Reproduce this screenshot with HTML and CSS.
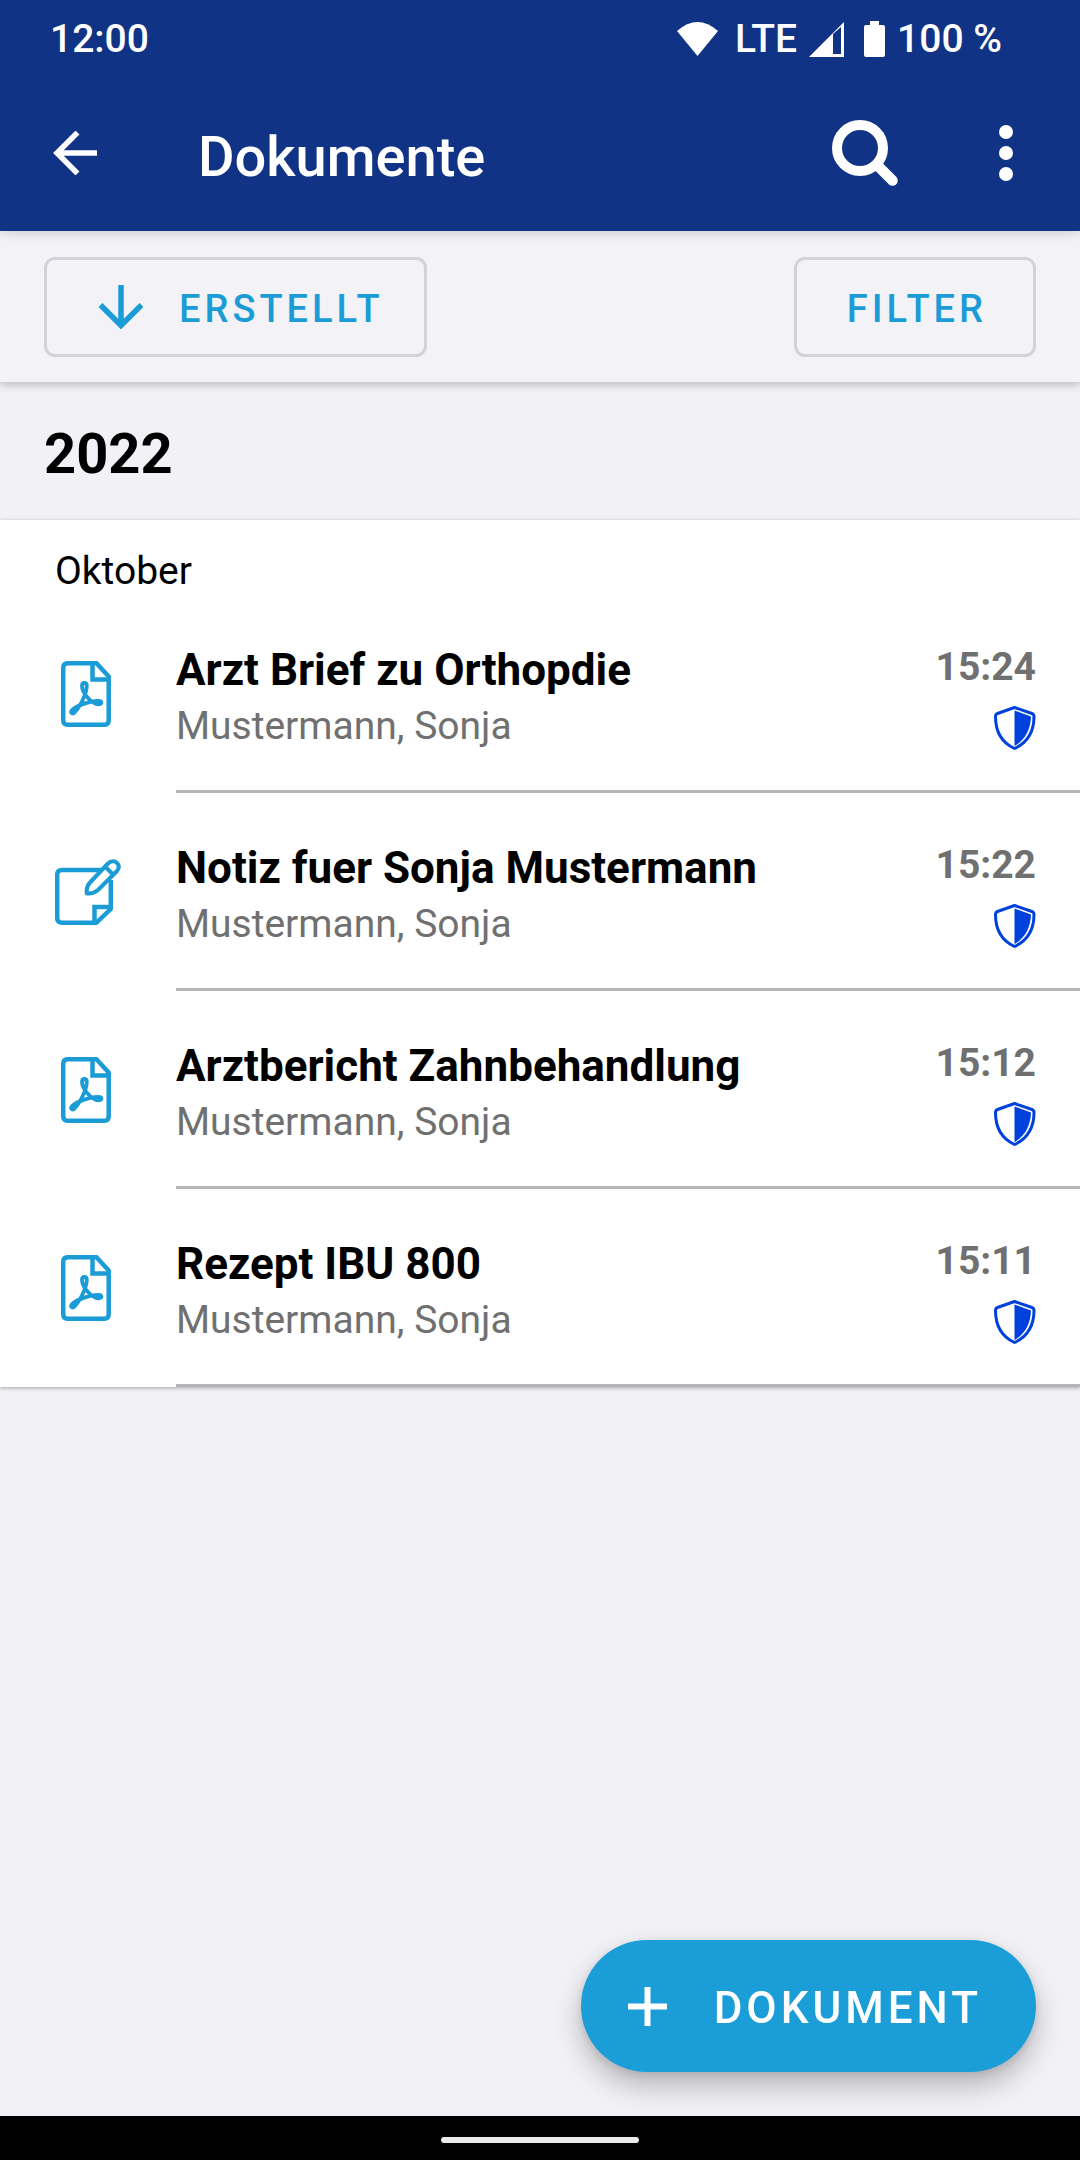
FILE: index.html
```html
<!DOCTYPE html>
<html lang="de">
<head>
<meta charset="utf-8">
<meta name="viewport" content="width=device-width, initial-scale=1">
<title>Dokumente</title>
<link rel="stylesheet" href="styles.css">
</head>
<body>
<svg class="sprite" aria-hidden="true">
  <symbol id="pdf" viewBox="0 0 66 66">
    <g fill="none" stroke="currentColor" stroke-width="4.500" stroke-linejoin="round">
      <path d="M12 2.200H41.500L53.700 15.500V59Q53.700 63.800 49 63.800H13Q8.200 63.800 8.200 59V7Q8.200 2.200 13 2.200"/>
      <path d="M37.500 2V18.500H54" stroke-linejoin="miter"/>
      <path stroke-width="3.800" d="M27 25C27 21 31.800 21 31.800 25C31.800 33 24 47 20 51C17.500 54 14.500 51.500 17 49C21 45 35 39.800 43 39.800C47.500 39.800 47.500 43 43.500 43.300C37 43.500 27 32 27 25Z"/>
    </g>
  </symbol>
  <symbol id="note" viewBox="0 0 66 66">
    <g fill="none" stroke="currentColor" stroke-width="4.500" stroke-linejoin="round">
      <path d="M47 11H7Q2.200 11 2.200 16V59Q2.200 63.700 7 63.700H41.500L55.800 50V21"/>
      <path d="M39.500 64V48H56" stroke-linejoin="miter"/>
      <path stroke-width="4" d="M31.800 34.400C31.200 30 32 26.500 35 23.500L53 4.500C56 1.500 60 1.700 62 4C64.500 6.500 64.500 9 62 12L43 31C40 33.500 36 35 31.800 34.400ZM50.500 8L58.500 16"/>
    </g>
  </symbol>
  <symbol id="shield" viewBox="0 0 42 44">
    <path fill="none" stroke="currentColor" stroke-width="3" stroke-linejoin="round" d="M20.500 1.500L38 7.500Q40 8.200 40 10.500C40 26 32.500 37 20.500 42.500C8.500 37 1.500 26 1.500 10.500Q1.500 8.200 3.500 7.500Z"/>
    <path fill="currentColor" d="M20.500 4.500L37 10.500C36.500 24 31 34 20.500 40Z"/>
  </symbol>
</svg>

<header class="top">
  <div class="status">
    <span>12:00</span>
    <div class="status-icons">
      <svg class="wifi" viewBox="0 0 41 34"><path fill="currentColor" d="M0 9Q20.500-9 41 9L20.500 34Z"/></svg>
      <span>LTE</span>
      <svg class="signal" viewBox="0 0 35 35"><path fill="currentColor" fill-rule="evenodd" d="M0 35L35 0V35ZM24 12V32H32V5Z"/></svg>
      <svg class="battery" viewBox="0 0 21 36"><path fill="currentColor" d="M6 0H15V4H19Q21 4 21 6V34Q21 36 19 36H2Q0 36 0 34V6Q0 4 2 4H6Z"/></svg>
      <span>100 %</span>
    </div>
  </div>
  <div class="appbar">
    <button class="icon-btn" type="button" aria-label="Zurück">
      <svg class="arrow" viewBox="0 0 44 44"><path fill="none" stroke="currentColor" stroke-width="5.500" d="M44 22H4M24.500 1.500L4 22L24.500 42.500"/></svg>
    </button>
    <h1>Dokumente</h1>
    <button class="icon-btn" type="button" aria-label="Suchen">
      <svg class="search" viewBox="0 0 66 66"><g fill="none" stroke="currentColor"><circle cx="28" cy="28" r="23" stroke-width="10"/><path stroke-width="10.500" stroke-linecap="round" d="M46 46L60.500 60.500"/></g></svg>
    </button>
    <button class="icon-btn" type="button" aria-label="Mehr">
      <svg class="more" viewBox="0 0 14 56"><g fill="currentColor"><circle cx="7" cy="7" r="7"/><circle cx="7" cy="28" r="7"/><circle cx="7" cy="49" r="7"/></g></svg>
    </button>
  </div>
</header>

<div class="toolbar">
  <button class="outlined" type="button">
    <svg class="arrow" viewBox="0 0 44 44"><path fill="none" stroke="currentColor" stroke-width="5.500" d="M22 0V40M1.500 20L22 40.500L42.500 20"/></svg>
    <span>ERSTELLT</span>
  </button>
  <button class="outlined" type="button"><span>FILTER</span></button>
</div>

<main>
  <h2>2022</h2>
  <section class="month">
    <h3>Oktober</h3>
    <ul>
      <li>
        <svg class="kind"><use href="#pdf"/></svg>
        <div class="entry">
          <div class="text"><h4>Arzt Brief zu Orthopdie</h4><p>Mustermann, Sonja</p></div>
          <div class="meta"><time>15:24</time><svg class="shield"><use href="#shield"/></svg></div>
        </div>
      </li>
      <li>
        <svg class="kind"><use href="#note"/></svg>
        <div class="entry">
          <div class="text"><h4>Notiz fuer Sonja Mustermann</h4><p>Mustermann, Sonja</p></div>
          <div class="meta"><time>15:22</time><svg class="shield"><use href="#shield"/></svg></div>
        </div>
      </li>
      <li>
        <svg class="kind"><use href="#pdf"/></svg>
        <div class="entry">
          <div class="text"><h4>Arztbericht Zahnbehandlung</h4><p>Mustermann, Sonja</p></div>
          <div class="meta"><time>15:12</time><svg class="shield"><use href="#shield"/></svg></div>
        </div>
      </li>
      <li>
        <svg class="kind"><use href="#pdf"/></svg>
        <div class="entry">
          <div class="text"><h4>Rezept IBU 800</h4><p>Mustermann, Sonja</p></div>
          <div class="meta"><time>15:11</time><svg class="shield"><use href="#shield"/></svg></div>
        </div>
      </li>
    </ul>
  </section>
</main>

<button class="fab" type="button">
  <svg class="plus" viewBox="0 0 39 39"><path fill="none" stroke="currentColor" stroke-width="6" d="M19.500 0V39M0 19.500H39"/></svg>
  <span>DOKUMENT</span>
</button>

<footer class="navbar"><span class="handle"></span></footer>
</body>
</html>
```
FILE: styles.css
```css
* {
  box-sizing: border-box;
  margin: 0;
  padding: 0;
}

body {
  display: flex;
  flex-direction: column;
  min-height: 100vh;
  background: #f1f1f6;
  color: #000;
  font-family: Roboto, sans-serif;
}

button {
  border: 0;
  background: none;
  color: inherit;
  font: inherit;
  cursor: pointer;
}

svg {
  display: block;
  flex: none;
}

.sprite {
  position: absolute;
  width: 0;
  height: 0;
}

/* Header */
.top {
  position: relative;
  z-index: 2;
  background: #113386;
  color: #fff;
  box-shadow: 0 2px 10px rgba(0, 0, 0, 0.16);
}

.status {
  display: flex;
  justify-content: space-between;
  padding: 15px 78px 15px 50px;
  font-size: 39px;
  font-weight: 500;
  line-height: 48px;
}

.status-icons {
  display: flex;
  align-items: center;
  gap: 12px;
}

.wifi {
  width: 41px;
  height: 34px;
  margin-right: 5px;
}

.signal {
  width: 35px;
  height: 35px;
  margin-right: 8px;
}

.battery {
  width: 21px;
  height: 36px;
}

.appbar {
  display: flex;
  align-items: center;
  height: 153px;
  padding: 0 43px 3px 31px;
}

.icon-btn {
  display: flex;
  align-items: center;
  justify-content: center;
  width: 88px;
  height: 88px;
}

.icon-btn + .icon-btn {
  margin-left: 66px;
  width: 62px;
}

.arrow {
  width: 44px;
  height: 44px;
}

.search {
  width: 66px;
  height: 66px;
}

.more {
  width: 14px;
  height: 56px;
}

h1 {
  flex: 1;
  padding: 7px 0 0 79px;
  font-size: 56px;
  font-weight: 500;
  line-height: 66px;
}

/* Sort and filter */
.toolbar {
  position: relative;
  z-index: 1;
  display: flex;
  justify-content: space-between;
  padding: 26px 44px 25px;
  background: #f2f2f7;
  box-shadow: 0 3px 8px rgba(0, 0, 0, 0.22);
}

.outlined {
  display: flex;
  align-items: center;
  gap: 36px;
  height: 100px;
  padding: 0 46px 0 50px;
  border: 3px solid #d2d2d8;
  border-radius: 11px;
  color: #1b9cd6;
  font-size: 38px;
  font-weight: 500;
  letter-spacing: 4px;
}

.outlined span {
  padding-top: 3px;
}

.outlined:first-child {
  padding: 0 40px 0 52px;
}

/* Document list */
main {
  flex: 1;
}

h2 {
  padding: 39px 44px 33px;
  font-size: 56px;
  font-weight: 700;
  line-height: 66px;
}

.month {
  background: #fff;
  box-shadow: 0 1px 4px rgba(0, 0, 0, 0.3);
}

h3 {
  padding: 27px 55px 0;
  font-size: 39px;
  font-weight: 400;
  line-height: 48px;
}

ul {
  list-style: none;
}

li {
  display: flex;
  gap: 55px;
  padding-left: 55px;
}

.kind {
  width: 66px;
  height: 66px;
  margin-top: 66px;
  color: #1b9cd6;
}

.entry {
  display: flex;
  flex: 1;
  justify-content: space-between;
  height: 198px;
  padding: 47px 44px 0 0;
  border-bottom: 3px solid #b5b5b5;
}

h4 {
  font-size: 44px;
  font-weight: 700;
  line-height: 56px;
}

.text p {
  color: #707070;
  font-size: 39px;
  line-height: 56px;
}

.meta {
  display: flex;
  flex-direction: column;
  align-items: flex-end;
  gap: 14px;
}

time {
  color: #707070;
  font-size: 39px;
  font-weight: 700;
  line-height: 50px;
}

.shield {
  width: 42px;
  height: 44px;
  color: #0040dc;
}

/* Floating action button */
.fab {
  position: fixed;
  right: 44px;
  bottom: 88px;
  z-index: 3;
  display: flex;
  align-items: center;
  gap: 47px;
  height: 132px;
  padding: 0 54px 0 47px;
  border-radius: 66px;
  background: #1b9dd8;
  color: #fff;
  font-size: 44px;
  font-weight: 500;
  letter-spacing: 4px;
  box-shadow: 0 14px 28px rgba(0, 0, 0, 0.25), 0 2px 8px rgba(0, 0, 0, 0.1);
}

.fab span {
  padding-top: 3px;
}

.plus {
  width: 39px;
  height: 39px;
}

/* System navigation */
.navbar {
  display: flex;
  align-items: center;
  justify-content: center;
  height: 44px;
  padding-top: 4px;
  background: #000;
}

.handle {
  width: 198px;
  height: 6px;
  border-radius: 3px;
  background: #ebebeb;
}
```
